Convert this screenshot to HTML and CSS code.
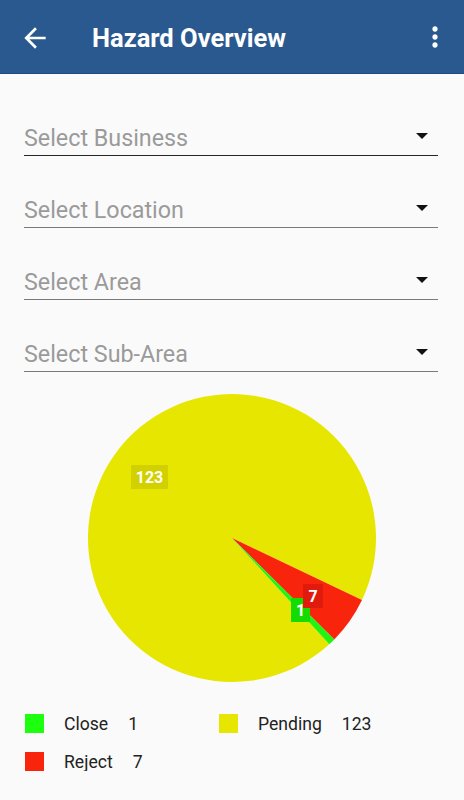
FILE: index.html
```html
<!DOCTYPE html>
<html>
<head>
<meta charset="utf-8">
<link rel="stylesheet" href="styles.css">
</head>
<body>
<header class="appbar">
  <svg class="icon back" viewBox="0 0 24 24" width="32" height="32"><path fill="#fff" d="M20 11H7.83l5.59-5.59L12 4l-8 8 8 8 1.41-1.41L7.83 13H20v-2z"/></svg>
  <h1 class="title">Hazard Overview</h1>
  <svg class="icon more" viewBox="0 0 24 24" width="32" height="32"><path fill="#fff" d="M12 8c1.1 0 2-.9 2-2s-.9-2-2-2-2 .9-2 2 .9 2 2 2zm0 2c-1.1 0-2 .9-2 2s.9 2 2 2 2-.9 2-2-.9-2-2-2zm0 6c-1.1 0-2 .9-2 2s.9 2 2 2 2-.9 2-2-.9-2-2-2z"/></svg>
</header>

<main class="content">
  <div class="field focused"><span class="placeholder">Select Business</span><span class="caret"></span></div>
  <div class="field"><span class="placeholder">Select Location</span><span class="caret"></span></div>
  <div class="field"><span class="placeholder">Select Area</span><span class="caret"></span></div>
  <div class="field"><span class="placeholder">Select Sub-Area</span><span class="caret"></span></div>

  <svg class="chart" viewBox="0 0 464 330" width="464" height="330">
    <path fill="#e6e600" d="M232 166 L329.29 272.17 A144 144 0 1 1 361.97 227.99 Z"/>
    <path fill="#f8250c" d="M232 166 L361.97 227.99 A144 144 0 0 1 334.27 267.38 Z"/>
    <path fill="#22f411" d="M232 166 L334.27 267.38 A144 144 0 0 1 329.29 272.17 Z"/>
    <rect x="131" y="93" width="37" height="24" fill="#d3d000"/>
    <text x="149.5" y="111" class="slice-label">123</text>
    <rect x="291" y="226" width="19" height="24" fill="#14dc00"/>
    <text x="300.5" y="244" class="slice-label">1</text>
    <rect x="303" y="212" width="20" height="24" fill="#e01a0c"/>
    <text x="313" y="230" class="slice-label">7</text>
  </svg>

  <div class="legend">
    <div class="legend-item"><span class="swatch green"></span><span class="lbl">Close</span><span class="val">1</span></div>
    <div class="legend-item"><span class="swatch yellow"></span><span class="lbl">Pending</span><span class="val">123</span></div>
    <div class="legend-item"><span class="swatch red"></span><span class="lbl">Reject</span><span class="val">7</span></div>
  </div>
</main>
</body>
</html>
```

FILE: styles.css
```css
* { box-sizing: border-box; }
html, body {
  margin: 0;
  padding: 0;
  background: #fafafa;
  font-family: Roboto, "Noto Sans", sans-serif;
}
.appbar {
  height: 74px;
  background: #2a5990;
  border-bottom: 1px solid #1c4c86;
  display: flex;
  align-items: center;
  padding: 0 13px 0 19px;
}
.icon { display: block; flex: none; }
.back { margin-top: 2px; }
.title {
  margin: 2px 0 0 41px;
  flex: 1;
  color: #fff;
  font-size: 25.5px;
  font-weight: 700;
  letter-spacing: 0;
}
.content {
  padding: 0;
}
.field {
  margin: 0 26px 0 24px;
  height: 72px;
  padding-bottom: 5px;
  border-bottom: 1px solid #7a7a7a;
  display: flex;
  align-items: flex-end;
  justify-content: space-between;
}
.field.focused {
  height: 82px;
  border-bottom-color: #262626;
}
.placeholder {
  color: #9a9a9a;
  font-size: 23.3px;
  line-height: 24px;
}
.caret {
  width: 0;
  height: 0;
  border-left: 6px solid transparent;
  border-right: 6px solid transparent;
  border-top: 6px solid #111;
  margin: 0 10px 11px 0;
}
.chart { display: block; }
.slice-label {
  fill: #fff;
  font-family: Roboto, sans-serif;
  font-weight: 700;
  font-size: 16px;
  text-anchor: middle;
}
.legend {
  display: grid;
  grid-template-columns: 194px 1fr;
  row-gap: 19px;
  padding: 12px 0 0 25px;
}
.legend-item {
  display: flex;
  align-items: center;
  height: 19px;
  font-size: 17.6px;
  color: #222;
}
.swatch {
  width: 19px;
  height: 19px;
  margin-right: 20px;
}
.swatch.green { background: #1eff10; }
.swatch.yellow { background: #e6e600; }
.swatch.red { background: #f8250c; }
.val { margin-left: 20px; }
```
